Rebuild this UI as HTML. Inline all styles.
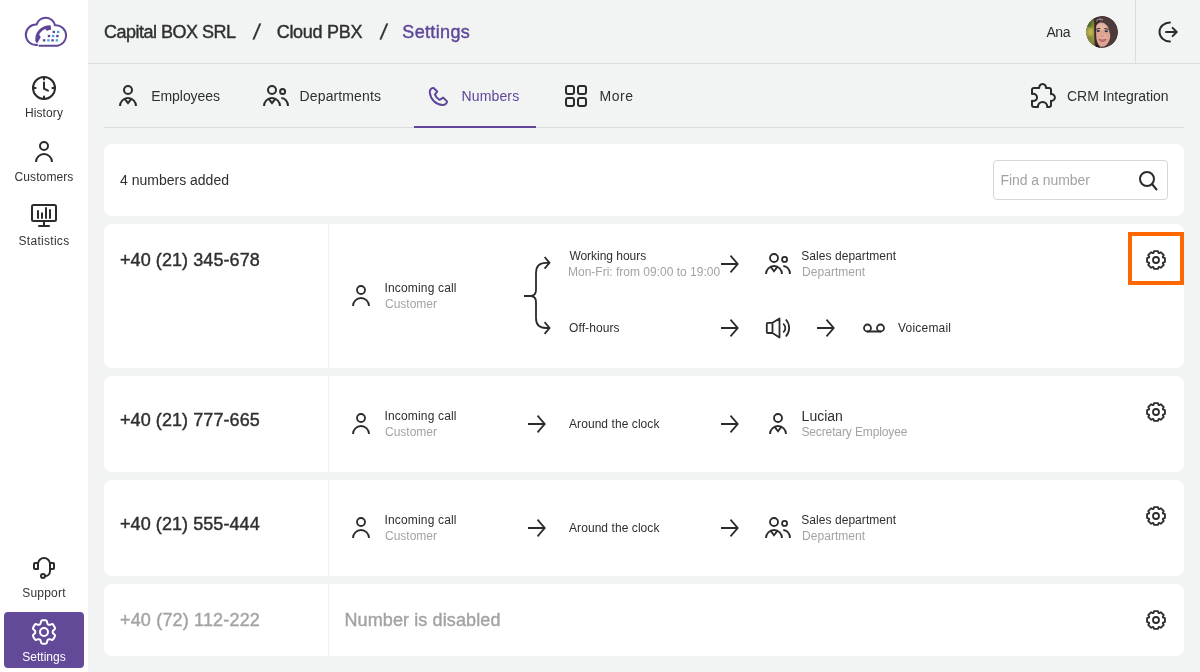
<!DOCTYPE html>
<html lang="en">
<head>
<meta charset="utf-8">
<title>Cloud PBX Settings</title>
<style>
*{box-sizing:border-box;margin:0;padding:0}
html,body{width:1200px;height:672px;overflow:hidden}
body{background:#f2f4f4;font-family:"Liberation Sans",sans-serif;color:#2f2f2f;position:relative}
.t{position:absolute;white-space:nowrap;line-height:1}
.m{-webkit-text-stroke:0.42px currentColor}
.side{position:absolute;left:0;top:0;width:88px;height:672px;background:#fff}
.side .lbl{position:absolute;left:0;width:88px;text-align:center;font-size:12px;line-height:1;color:#333}
svg{position:absolute;overflow:visible}
.ic{fill:none;stroke:#2b2b2b;stroke-width:2;stroke-linecap:round;stroke-linejoin:round}
.hline{position:absolute;background:#dcdcdc;height:1px}
.vline{position:absolute;background:#dcdcdc;width:1px}
.card{position:absolute;left:104px;width:1080px;background:#fff;border-radius:8px}
.sep{position:absolute;left:224px;top:0;bottom:0;width:1px;background:#f1f3f3}
.s12{font-size:12px}
.g{color:#a3a3a3}
.ph{font-size:18px;left:16px}
</style>
</head>
<body>
<div id="app" style="position:absolute;left:0;top:0;width:1200px;height:672px;will-change:transform">

<!-- SIDEBAR -->
<div class="side">
  <div class="lbl" style="top:107px;letter-spacing:0.12px">History</div>
  <div class="lbl" style="top:171px;letter-spacing:0.09px">Customers</div>
  <div class="lbl" style="top:235px;letter-spacing:0.29px">Statistics</div>
  <div class="lbl" style="top:587px;letter-spacing:0.19px">Support</div>
  <div style="position:absolute;left:4px;top:612px;width:80px;height:56px;border-radius:4px;background:#624a99"></div>
  <div class="lbl" style="top:651px;color:#fff">Settings</div>
</div>

<!-- HEADER -->
<div class="hline" style="left:88px;top:63px;width:1112px"></div>
<div class="vline" style="left:1135px;top:0;height:63px"></div>
<div class="t m" style="left:104px;top:23px;font-size:18px;letter-spacing:-0.50px">Capital BOX SRL</div>
<div class="t m" style="left:254.3px;top:20.5px;font-size:21px;transform:skewX(-9deg)">/</div>
<div class="t m" style="left:276.7px;top:23px;font-size:18px;letter-spacing:-0.29px">Cloud PBX</div>
<div class="t m" style="left:380.6px;top:20.5px;font-size:21px;transform:skewX(-9deg)">/</div>
<div class="t m" style="left:402.3px;top:23px;font-size:18px;color:#5f4699;letter-spacing:0.35px">Settings</div>
<div class="t" style="left:1046.5px;top:25px;font-size:14px;letter-spacing:-0.47px">Ana</div>
<svg width="32" height="32" viewBox="0 0 32 32" style="left:1086px;top:16px;overflow:hidden;border-radius:50%">
  <defs>
    <clipPath id="avc"><circle cx="16" cy="16" r="16"/></clipPath>
    <filter id="avb" x="-20%" y="-20%" width="140%" height="140%"><feGaussianBlur stdDeviation="0.55"/></filter>
    <linearGradient id="avg" x1="0" y1="0" x2="0" y2="1"><stop offset="0" stop-color="#2f4a22"/><stop offset="0.25" stop-color="#6f8234"/><stop offset="0.5" stop-color="#a9a446"/><stop offset="0.75" stop-color="#8a8a3c"/><stop offset="1" stop-color="#767a38"/></linearGradient>
  </defs>
  <g clip-path="url(#avc)">
    <rect width="32" height="32" fill="#503a3a"/>
    <g filter="url(#avb)">
      <rect x="-2" y="-2" width="10.5" height="36" fill="url(#avg)"/>
      <ellipse cx="4.5" cy="16" rx="2.2" ry="3.5" fill="#bdb04c"/><ellipse cx="3" cy="23" rx="2" ry="2.5" fill="#7f8a3a"/>
      <ellipse cx="3" cy="8" rx="3" ry="3" fill="#55702c"/>
      <path d="M8 2 C8.6 12 8.2 24 9.5 33 L14 33 L12 20 L11.5 8 L14 1 Z" fill="#3e2a2a"/>
      <path d="M10 3 C14 -1 22 -1 27 4 C32 10 33 20 30 28 L24 33 L22 20 Z" fill="#4e3a3a"/>
      <path d="M10.5 5.5 C12 3 15 2.6 17 4" stroke="#9a8a90" stroke-width="1.4" fill="none"/><path d="M13 4 C11 7 9.6 11 9.4 15" stroke="#3a2828" stroke-width="1.6" fill="none"/>
      <path d="M10 12 C10 7.5 14 6 17 6.8 C21 8 23.2 12 23.4 16 C24.8 19 24.6 23 22 27 C20.5 29.5 18.5 30.6 16.5 30.8 C13.5 31.5 11 27 10.3 22 Z" fill="#dba592"/>
      <ellipse cx="15.5" cy="11" rx="4.5" ry="3" fill="#e6b6a4"/>
      <ellipse cx="17.5" cy="21" rx="3.5" ry="3" fill="#e2ae9c"/>
      <path d="M10 28 L14 32 L10 32 Z" fill="#1a1212"/>
      <path d="M10.2 13.1 L14.2 12.4 M18.4 12.6 L22.6 13.3" stroke="#3a2424" stroke-width="1"/>
      <ellipse cx="12.2" cy="15" rx="1.7" ry="0.95" fill="#2f3b50"/>
      <ellipse cx="20.3" cy="15.3" rx="1.8" ry="0.95" fill="#2f3b50"/>
      <path d="M15 19.5 C15.5 20.5 17 20.5 17.6 19.6" stroke="#b87a6c" stroke-width="0.8" fill="none"/>
      <path d="M12.6 23 C15 24 18 24 20.2 22.8 C19.2 26.4 14.5 26.8 12.6 23 Z" fill="#a0323f"/>
      <path d="M14.4 24.3 C15.8 24.8 17.4 24.8 18.6 24.2" stroke="#dcbcb8" stroke-width="0.6" fill="none"/>
    </g>
  </g>
</svg>

<!-- TABS -->
<div class="hline" style="left:104px;top:127px;width:1080px"></div>
<div style="position:absolute;left:414px;top:126px;width:122px;height:2px;background:#5f4699"></div>
<div class="t" style="left:151.2px;top:89px;font-size:14px;letter-spacing:-0.05px">Employees</div>
<div class="t" style="left:299.6px;top:89px;font-size:14px;letter-spacing:0.12px">Departments</div>
<div class="t" style="left:461.6px;top:89px;font-size:14px;color:#5f4699;letter-spacing:0.13px">Numbers</div>
<div class="t" style="left:599.6px;top:89px;font-size:14px;letter-spacing:0.49px">More</div>
<div class="t" style="left:1067px;top:89px;font-size:14px;letter-spacing:-0.03px">CRM Integration</div>

<!-- SEARCH CARD -->
<div class="card" style="top:144px;height:72px">
  <div class="t" style="left:16px;top:29px;font-size:14px">4 numbers added</div>
  <div style="position:absolute;left:889px;top:16px;width:175px;height:40px;border:1px solid #d4d7d7;border-radius:4px"></div>
  <div class="t g" style="left:896.4px;top:29px;font-size:14px;letter-spacing:-0.06px">Find a number</div>
</div>

<!-- ROW 1 -->
<div class="card" style="top:224px;height:144px">
  <div class="sep"></div>
  <div class="t m ph" style="top:27px;letter-spacing:0.08px">+40 (21) 345-678</div>
  <div class="t s12" style="left:280.5px;top:58px;letter-spacing:0.16px">Incoming call</div>
  <div class="t s12 g" style="left:281px;top:74px">Customer</div>
  <div class="t s12" style="left:465.4px;top:26px;letter-spacing:-0.03px">Working hours</div>
  <div class="t s12 g" style="left:464.0px;top:42px;letter-spacing:0px">Mon-Fri: from 09:00 to 19:00</div>
  <div class="t s12" style="left:465px;top:98px;letter-spacing:0.09px">Off-hours</div>
  <div class="t s12" style="left:697.3px;top:26px;letter-spacing:0.05px">Sales department</div>
  <div class="t s12 g" style="left:698px;top:42px;letter-spacing:0.05px">Department</div>
  <div class="t s12" style="left:794px;top:98px;letter-spacing:0.21px">Voicemail</div>
  <div style="position:absolute;left:1024px;top:8px;width:56px;height:53px;border:4px solid #ff6700"></div>
</div>

<!-- ROW 2 -->
<div class="card" style="top:376px;height:96px">
  <div class="sep"></div>
  <div class="t m ph" style="top:35px;letter-spacing:0.08px">+40 (21) 777-665</div>
  <div class="t s12" style="left:280.5px;top:34px;letter-spacing:0.16px">Incoming call</div>
  <div class="t s12 g" style="left:281px;top:50px">Customer</div>
  <div class="t s12" style="left:465px;top:42px;letter-spacing:0.07px">Around the clock</div>
  <div class="t" style="left:697.6px;top:33px;font-size:14px">Lucian</div>
  <div class="t s12 g" style="left:697.4px;top:50px;letter-spacing:-0.12px">Secretary Employee</div>
</div>

<!-- ROW 3 -->
<div class="card" style="top:480px;height:96px">
  <div class="sep"></div>
  <div class="t m ph" style="top:35px;letter-spacing:0.07px">+40 (21) 555-444</div>
  <div class="t s12" style="left:280.5px;top:34px;letter-spacing:0.16px">Incoming call</div>
  <div class="t s12 g" style="left:281px;top:50px">Customer</div>
  <div class="t s12" style="left:465px;top:42px;letter-spacing:0.07px">Around the clock</div>
  <div class="t s12" style="left:697.3px;top:34px;letter-spacing:0.05px">Sales department</div>
  <div class="t s12 g" style="left:698px;top:50px;letter-spacing:0.05px">Department</div>
</div>

<!-- ROW 4 -->
<div class="card" style="top:584px;height:72px">
  <div class="sep"></div>
  <div class="t m ph g" style="top:27px;letter-spacing:0.17px">+40 (72) 112-222</div>
  <div class="t m g" style="left:240.4px;top:27px;font-size:18px;letter-spacing:0.12px">Number is disabled</div>
</div>

<!-- ICONS -->
<svg width="1200" height="672" viewBox="0 0 1200 672" style="left:0;top:0;pointer-events:none">
<defs>
  <g id="i-person"><circle cx="0" cy="-6" r="4"/><path d="M-8 10 a8 8 0 0 1 16 0" stroke-linecap="butt"/></g>
  <g id="i-emp"><circle cx="0" cy="-6" r="4"/><path d="M-8 10 a8 8 0 0 1 16 0" stroke-linecap="butt"/><path d="M-3.5 2.6 L0 7.2 L3.5 2.6" stroke-linecap="butt" stroke-linejoin="miter"/></g>
  <g id="i-dept"><circle cx="-3" cy="-6" r="4"/><path d="M-11 10 a8 8 0 0 1 16 0" stroke-linecap="butt"/><path d="M-6.5 2.6 L-3 7.2 L0.5 2.6" stroke-linecap="butt" stroke-linejoin="miter"/><circle cx="7.6" cy="-4.6" r="2.5"/><path d="M6.3 2 A6.7 8 0 0 1 13 10" stroke-linecap="butt"/></g>
  <g id="i-arrow"><path d="M-9 0 H7.4 M0.5 -8.3 L7.7 0 L0.5 8.3" stroke-linecap="butt" stroke-linejoin="miter"/></g>
  <g id="i-gear8"><path d="M2.70 -6.98 Q2.38 -7.11 2.34 -7.46 L2.19 -8.60 Q2.15 -8.95 1.80 -8.95 L-1.80 -8.95 Q-2.15 -8.95 -2.19 -8.60 L-2.34 -7.46 Q-2.38 -7.11 -2.70 -6.98 L-3.02 -6.85 Q-3.35 -6.71 -3.62 -6.93 L-4.53 -7.63 Q-4.81 -7.84 -5.05 -7.60 L-7.60 -5.05 Q-7.84 -4.81 -7.63 -4.53 L-6.93 -3.62 Q-6.71 -3.35 -6.85 -3.02 L-6.98 -2.70 Q-7.11 -2.38 -7.46 -2.34 L-8.60 -2.19 Q-8.95 -2.15 -8.95 -1.80 L-8.95 1.80 Q-8.95 2.15 -8.60 2.19 L-7.46 2.34 Q-7.11 2.38 -6.98 2.70 L-6.85 3.02 Q-6.71 3.35 -6.93 3.62 L-7.63 4.53 Q-7.84 4.81 -7.60 5.05 L-5.05 7.60 Q-4.81 7.84 -4.53 7.63 L-3.62 6.93 Q-3.35 6.71 -3.02 6.85 L-2.70 6.98 Q-2.38 7.11 -2.34 7.46 L-2.19 8.60 Q-2.15 8.95 -1.80 8.95 L1.80 8.95 Q2.15 8.95 2.19 8.60 L2.34 7.46 Q2.38 7.11 2.70 6.98 L3.02 6.85 Q3.35 6.71 3.62 6.93 L4.53 7.63 Q4.81 7.84 5.05 7.60 L7.60 5.05 Q7.84 4.81 7.63 4.53 L6.93 3.62 Q6.71 3.35 6.85 3.02 L6.98 2.70 Q7.11 2.38 7.46 2.34 L8.60 2.19 Q8.95 2.15 8.95 1.80 L8.95 -1.80 Q8.95 -2.15 8.60 -2.19 L7.46 -2.34 Q7.11 -2.38 6.98 -2.70 L6.85 -3.02 Q6.71 -3.35 6.93 -3.62 L7.63 -4.53 Q7.84 -4.81 7.60 -5.05 L5.05 -7.60 Q4.81 -7.84 4.53 -7.63 L3.62 -6.93 Q3.35 -6.71 3.02 -6.85Z"/><circle cx="0" cy="0" r="3"/></g>
</defs>

<!-- logo -->
<g fill="none" stroke="#5f4699" stroke-width="2" stroke-linecap="round" stroke-linejoin="round">
  <path d="M37.07 44.94 A10.2 10.2 0 1 1 36.53 24.61 A9.5 9.5 0 0 1 55.00 25.35 A10.3 10.3 0 0 1 66.10 35.60 A10.3 10.3 0 0 1 57.77 45.71 H39.4"/>
</g>
<path d="M50.6 25.2 C44 24.8 36 29.5 35.3 38 L35.3 41 L37 43.7 L40.7 37.2 L39.2 34.6 C40 32.5 42.5 30 45.3 29 L46.7 30.7 L51.2 29.4 Z" fill="#5f4699"/>
<g fill="#5f4699"><rect x="52.6" y="30.8" width="2.4" height="2.3"/><rect x="47.8" y="34.9" width="2.4" height="2.3"/><rect x="56.2" y="34.9" width="2.4" height="2.3"/><rect x="42.9" y="39.2" width="2.4" height="2.3"/><rect x="51.4" y="39.2" width="2.4" height="2.3"/></g>
<g fill="#41a8e0"><rect x="57" y="30.8" width="2.4" height="2.3"/><rect x="52" y="34.9" width="2.4" height="2.3"/><rect x="47.2" y="39.2" width="2.4" height="2.3"/><rect x="55.6" y="39.2" width="2.4" height="2.3"/></g>

<!-- sidebar icons -->
<g class="ic" stroke-linecap="butt">
  <circle cx="44" cy="88" r="11"/>
  <path d="M44 77 v2.6 M44 96.4 v2.6 M33 88 h2.6 M52.4 88 h2.6 M44 82.5 V88.6 L48 90.6" stroke-linejoin="miter"/>
</g>
<use href="#i-person" class="ic" x="44" y="152"/>
<g class="ic" stroke-linecap="butt">
  <rect x="32" y="205" width="24" height="16" rx="1.5"/>
  <path d="M44 222 v4 M39 226 h10 M38 211 v7 M42 213.2 v4.8 M46 208 v10 M50 210 v8"/>
</g>
<g class="ic">
  <path d="M38 569 V564 a6 6 0 0 1 12 0 V571.5 a5 5 0 0 1 -5 4.6"/>
  <rect x="34" y="563" width="4" height="6" rx="1"/>
  <rect x="50" y="563" width="4" height="6" rx="1"/>
  <circle cx="43" cy="576" r="2"/>
</g>
<g class="ic" style="stroke:#fff" transform="translate(44 632)">
  <path d="M4.32 -7.48 Q3.40 -8.01 3.18 -9.29 L3.00 -10.39 Q2.78 -11.67 1.48 -11.67 L-1.48 -11.67 Q-2.78 -11.67 -3.00 -10.39 L-3.18 -9.29 Q-3.40 -8.01 -4.32 -7.48 L-4.32 -7.48 Q-5.24 -6.95 -6.45 -7.40 L-7.50 -7.79 Q-8.72 -8.25 -9.37 -7.12 L-10.85 -4.55 Q-11.50 -3.43 -10.50 -2.60 L-9.64 -1.89 Q-8.64 -1.06 -8.64 -0.00 L-8.64 -0.00 Q-8.64 1.06 -9.64 1.89 L-10.50 2.60 Q-11.50 3.43 -10.85 4.55 L-9.37 7.12 Q-8.72 8.25 -7.50 7.79 L-6.45 7.40 Q-5.24 6.95 -4.32 7.48 L-4.32 7.48 Q-3.40 8.01 -3.18 9.29 L-3.00 10.39 Q-2.78 11.67 -1.48 11.67 L1.48 11.67 Q2.78 11.67 3.00 10.39 L3.18 9.29 Q3.40 8.01 4.32 7.48 L4.32 7.48 Q5.24 6.95 6.45 7.40 L7.50 7.79 Q8.72 8.25 9.37 7.12 L10.85 4.55 Q11.50 3.43 10.50 2.60 L9.64 1.89 Q8.64 1.06 8.64 -0.00 L8.64 -0.00 Q8.64 -1.06 9.64 -1.89 L10.50 -2.60 Q11.50 -3.43 10.85 -4.55 L9.37 -7.12 Q8.72 -8.25 7.50 -7.79 L6.45 -7.40 Q5.24 -6.95 4.32 -7.48Z"/><circle cx="0" cy="0" r="4"/>
</g>

<!-- header logout -->
<g class="ic" stroke-linecap="butt" stroke-linejoin="miter">
  <path d="M1170 22.5 A10.5 9.5 0 0 0 1170 41.5"/>
  <path d="M1166 32 H1176.2 M1172.6 27.9 L1176.7 32 L1172.6 36.1"/>
</g>

<!-- tab icons -->
<use href="#i-emp" class="ic" x="128" y="96"/>
<use href="#i-dept" class="ic" x="275" y="96"/>
<path class="ic" style="stroke:#5f4699" d="M433 88 C431 88 429.6 90 429.8 92.5 C430.5 99.5 436 104.6 442.5 104.9 C445 105 447 103.4 447 101.4 L443.2 97.6 L439.6 99.8 C437.5 98.8 435.8 97 435 94.6 L437.2 91.4 L433.6 88 Z"/>
<g class="ic"><rect x="566" y="86" width="8" height="8" rx="2"/><rect x="578" y="86" width="8" height="8" rx="2"/><rect x="566" y="98" width="8" height="8" rx="2"/><rect x="578" y="98" width="8" height="8" rx="2"/></g>
<path class="ic" d="M1039.24 88 H1034 a2 2 0 0 0 -2 2 V94.1 A3.6 3.6 0 1 1 1032 100.7 V105 a2 2 0 0 0 2 2 H1038.03 A4.6 4.6 0 1 1 1047.17 107 H1049 a2 2 0 0 0 2 -2 V100.86 A3.4 3.4 0 1 0 1051 94.14 V90 a2 2 0 0 0 -2 -2 H1045.96 A3.4 3.4 0 1 0 1039.24 88 Z"/>

<!-- search -->
<g class="ic"><circle cx="1147" cy="179" r="7"/><path d="M1152 184 L1156.5 189.5"/></g>

<!-- row 1 -->
<g class="ic" style="stroke-width:1.8">
<use href="#i-person" x="361" y="296"/>
<path d="M524 296 H530 Q536 296 536 290 V273 C536 266 539.5 262.8 546 262.8 H549 M544.6 257 L549.5 262.8 L544.6 268.6" stroke-linecap="butt" stroke-linejoin="miter"/>
<path d="M530 296 Q536 296 536 302 V318 C536 325 539.5 328 546 328 H549 M544.6 322.2 L549.5 328 L544.6 333.8" stroke-linecap="butt" stroke-linejoin="miter"/>
<use href="#i-arrow" x="730" y="264"/>
<use href="#i-arrow" x="730" y="328"/>
<use href="#i-arrow" x="826" y="328"/>
<use href="#i-dept" x="777" y="264"/>
<path d="M772.5 322.8 H767.8 a1 1 0 0 0 -1 1 V332 a1 1 0 0 0 1 1 H772.5 L779.5 337.5 V318.5 Z M772.5 322.8 V333" stroke-linejoin="round"/>
<path d="M783.2 323.6 A5.6 5.6 0 0 1 783.2 332.4 M785.8 319.5 A12.5 12.5 0 0 1 785.8 336.5" stroke-linecap="butt"/>
<circle cx="867.5" cy="328" r="3.5"/><circle cx="880.5" cy="328" r="3.5"/><path d="M867.5 331.5 H880.5"/>
</g>
<g class="ic" style="stroke-width:1.8">
<use href="#i-gear8" x="1156" y="260"/>
<use href="#i-gear8" x="1156" y="412"/>
<use href="#i-gear8" x="1156" y="516"/>
<use href="#i-gear8" x="1156" y="620"/>
</g>

<!-- row 2 / 3 -->
<g class="ic" style="stroke-width:1.8">
<use href="#i-person" x="361" y="424"/>
<use href="#i-arrow" x="537" y="424"/>
<use href="#i-arrow" x="730" y="424"/>
<use href="#i-emp" x="778" y="424"/>
<use href="#i-person" x="361" y="528"/>
<use href="#i-arrow" x="537" y="528"/>
<use href="#i-arrow" x="730" y="528"/>
<use href="#i-dept" x="777" y="528"/>
</g>
</svg>

</div>
</body>
</html>
